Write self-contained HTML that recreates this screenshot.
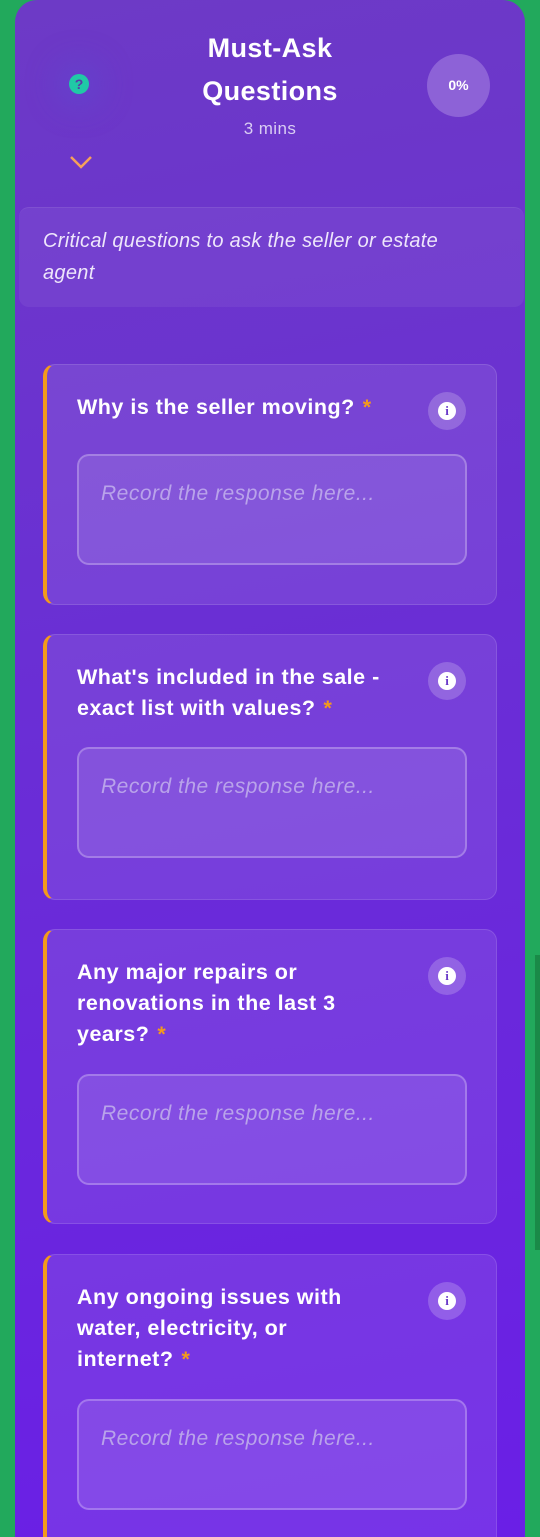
<!DOCTYPE html>
<html><head><meta charset="utf-8"><style>
*{box-sizing:border-box;margin:0;padding:0}
html,body{width:540px;height:1537px;overflow:hidden}
body{background:#22a95c;font-family:"Liberation Sans",sans-serif;position:relative}
.sb{position:absolute;left:535px;top:955px;width:5px;height:295px;background:#1a8a48}
.panel{position:absolute;left:15px;top:0;width:510px;height:1537px;overflow:hidden;border-radius:22px 22px 0 0;background:linear-gradient(170deg,#6d3ac6 0%,#6a2fd4 40%,#6a1fe6 100%)}
.title{position:absolute;left:0;width:510px;text-align:center;color:#fff;font-weight:bold;font-size:27px;letter-spacing:.4px;line-height:43px;top:27px}
.mins{position:absolute;top:119px;width:510px;text-align:center;color:#d9cdf3;font-size:17px;letter-spacing:.4px}
.q{position:absolute;left:54px;top:74px;width:20px;height:20px;border-radius:50%;background:#20c9a6;color:#5a3aa8;font-weight:bold;font-size:14px;text-align:center;line-height:20px;box-shadow:0 0 30px 14px rgba(90,80,210,.35)}
.pct{position:absolute;left:412px;top:54px;width:63px;height:63px;border-radius:50%;background:#8d62d7;color:#fff;font-weight:bold;font-size:14px;text-align:center;line-height:63px}
.desc{position:absolute;left:4px;top:207px;width:505px;height:100px;border-radius:10px;background:rgba(255,255,255,.06);border-top:1px solid rgba(255,255,255,.08);color:#eee6fb;font-style:italic;font-size:20px;letter-spacing:.3px;line-height:32px;padding:17px 45px 17px 24px}
.card{position:absolute;left:28px;width:454px;border-radius:12px;background:rgba(255,255,255,.09);border:1px solid rgba(255,255,255,.12);border-left:4px solid #f39a1c}
.card h3{position:absolute;left:30px;top:27px;width:330px;color:#fff;font-size:21.5px;letter-spacing:.5px;line-height:31px}
.card h3 span{color:#f39a1c;margin-left:8px}
.info{position:absolute;left:381px;top:27px;width:38px;height:38px;border-radius:50%;background:rgba(255,255,255,.2)}
.info:after{content:"i";position:absolute;left:10px;top:10px;width:18px;height:18px;border-radius:50%;background:#fff;color:#6a3ac8;font-weight:bold;font-size:13px;text-align:center;line-height:18px;font-family:"Liberation Serif",serif}
.inp{position:absolute;left:30px;width:390px;height:111px;border-radius:12px;background:rgba(255,255,255,.1);border:2px solid rgba(255,255,255,.25);color:#b9a3ea;font-style:italic;font-size:21px;letter-spacing:.5px;padding:26px 22px}
</style></head><body>
<div class="panel">
<div class="q">?</div>
<div class="title">Must-Ask<br>Questions</div>
<div class="mins">3 mins</div>
<svg style="position:absolute;left:54px;top:154px" width="24" height="16"><path d="M2 3 L12 13 L22 3" stroke="#f5a05a" stroke-width="2.5" fill="none"/></svg>
<div class="pct">0%</div>
<div class="desc">Critical questions to ask the seller or estate agent</div>
<div class="card" style="top:364px;height:241px"><h3>Why is the seller moving?<span>*</span></h3><div class="info"></div><div class="inp" style="top:89px">Record the response here...</div></div>
<div class="card" style="top:634px;height:266px"><h3>What's included in the sale - exact list with values?<span>*</span></h3><div class="info"></div><div class="inp" style="top:112px">Record the response here...</div></div>
<div class="card" style="top:929px;height:295px"><h3>Any major repairs or renovations in the last 3 years?<span>*</span></h3><div class="info"></div><div class="inp" style="top:144px">Record the response here...</div></div>
<div class="card" style="top:1254px;height:320px"><h3 style="width:290px">Any ongoing issues with water, electricity, or internet?<span>*</span></h3><div class="info"></div><div class="inp" style="top:144px">Record the response here...</div></div>
</div>
<div class="sb"></div>
</body></html>
